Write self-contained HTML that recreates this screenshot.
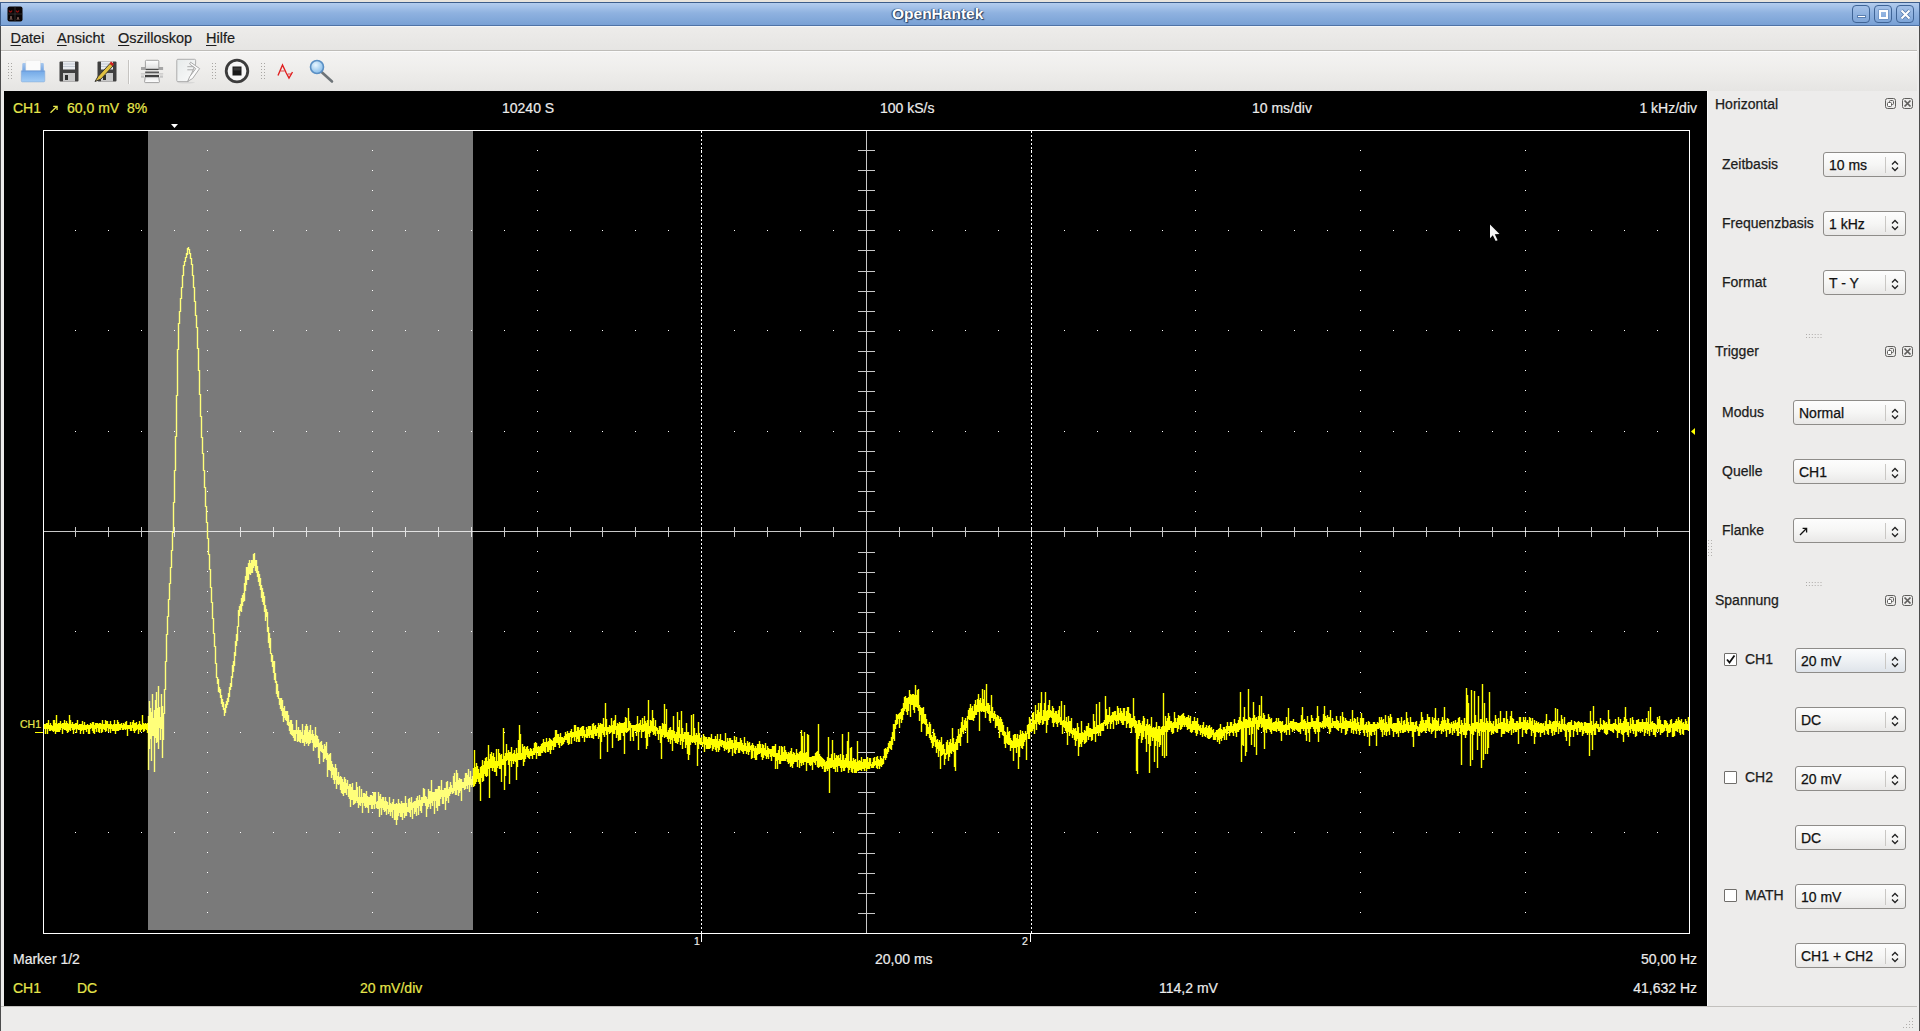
<!DOCTYPE html>
<html><head><meta charset="utf-8">
<style>
*{box-sizing:border-box}
html,body{margin:0;padding:0}
body{width:1920px;height:1031px;overflow:hidden;position:relative;background:#e9e4dc;font-family:"Liberation Sans",sans-serif;color:#1a1a1a}
.abs{position:absolute}
#frame{position:absolute;left:0;top:2px;width:1920px;height:1029px;background:#edeceb;border-left:1px solid #4c4c4c;border-right:1px solid #4c4c4c}
#title{position:absolute;left:0;top:2px;width:1920px;height:24px;background:linear-gradient(#b4cdee,#8fb2e0 45%,#79a1d5);border-top:1px solid #3d5d8a;border-bottom:1px solid #4f73a6;border-left:1px solid #3d5d8a;border-right:1px solid #3d5d8a}
#title .t{position:absolute;left:891px;top:2px;font-weight:bold;font-size:15.5px;white-space:pre;color:#fff;text-shadow:0 0 1px #2a4060,1px 1px 1px #2a4060,-1px 0 1px #2a4060}
.wb{position:absolute;top:2px;width:18px;height:18px;border:1px solid #3f6496;border-radius:4px;background:linear-gradient(#a4c1e8,#7ea5d8)}
#menubar{position:absolute;left:1px;top:26px;width:1916px;height:25px;background:linear-gradient(#edecea,#e6e5e3);border-top:1px solid #f4f6f8;border-bottom:1px solid #bfbdb9}
.mi{position:absolute;top:3px;font-size:14.5px;color:#1c1c1c;-webkit-text-stroke:0.2px #1c1c1c}
.mi u{text-decoration:underline;text-underline-offset:1.5px}
#toolbar{position:absolute;left:1px;top:51px;width:1916px;height:40px;background:linear-gradient(#f4f3f2,#eeedeb 50%,#e6e5e3);border-top:1px solid #fbfbfb}
.grip{position:absolute;width:6px;height:17px;background-image:radial-gradient(circle,#a8a6a3 0.7px,transparent 1px);background-size:3px 3.3px}
#scope{position:absolute;left:4px;top:91px;width:1703px;height:915px;background:#000}
.st{position:absolute;font-size:14px;white-space:pre;line-height:16px;-webkit-text-stroke:0.2px currentColor}
.y{color:#e6e64c}
.w{color:#ececec}
#dock{position:absolute;left:1707px;top:91px;width:210px;height:915px;background:#edeceb;border-left:1px solid #f8f8f8}
.dt{position:absolute;font-size:14px;color:#1c1c1c;white-space:pre;line-height:16px;-webkit-text-stroke:0.25px #1c1c1c}
.cb{position:absolute;height:25px;border:1px solid #8e8c89;border-radius:3px;background:linear-gradient(#fdfdfd,#f6f6f5 50%,#e9e8e7);font-size:14px;color:#111;line-height:16px;-webkit-text-stroke:0.25px #111}
.cb span{position:absolute;left:5px;top:3.5px;white-space:pre}
.cb i{position:absolute;right:19px;top:4px;height:16px;border-left:1px solid #c9c7c4}
.cb svg{position:absolute;right:6px;top:7px}
.chk{position:absolute;width:13px;height:13px;border:1px solid #706e6b;background:#fff;border-radius:1px}
.dicon{position:absolute;width:11px;height:11px;border:1px solid #5f5e5c;border-radius:2px}
.sep{position:absolute;width:17px;height:4px;background-image:radial-gradient(circle,#b5b3b0 0.6px,transparent 0.9px);background-size:2.83px 2px}
#status{position:absolute;left:1px;top:1006px;width:1916px;height:24px;background:#edeceb;border-top:1px solid #c2c0bd}
</style></head><body>
<div id="frame"></div>
<div id="title">
  <svg class="abs" style="left:6px;top:3px" width="16" height="16" viewBox="0 0 16 16"><rect x="0.5" y="0.5" width="15" height="15" rx="2" fill="#0a0505"/><path d="M2 4.5q1.5 3 3 0M9 4.5q1.5 3 3 0" stroke="#8a1010" stroke-width="1.3" fill="none"/><path d="M0.5 8h15M8 0.5v15" stroke="#444" stroke-width="0.6"/><path d="M3 14l1-4 1 4M10 14l1-3 1 3" stroke="#8b6a60" stroke-width="0.8" fill="none"/></svg>
  <div class="t">OpenHantek</div>
  <div class="wb" style="left:1851px"><div class="abs" style="left:4px;top:9px;width:9px;height:3px;background:#fff;border:0.5px solid #5a7fb0"></div></div>
  <div class="wb" style="left:1873px"><div class="abs" style="left:4px;top:4px;width:9px;height:9px;border:2px solid #fff;box-shadow:0 0 0 0.5px #5a7fb0"></div></div>
  <div class="wb" style="left:1895px"><svg class="abs" style="left:3px;top:3px" width="11" height="11" viewBox="0 0 11 11"><path d="M1.5 1.5l8 8M9.5 1.5l-8 8" stroke="#4f74a8" stroke-width="3.6"/><path d="M1.5 1.5l8 8M9.5 1.5l-8 8" stroke="#fff" stroke-width="2.2"/></svg></div>
</div>
<div id="menubar">
  <div class="mi" style="left:9.5px"><u>D</u>atei</div>
  <div class="mi" style="left:56px"><u>A</u>nsicht</div>
  <div class="mi" style="left:117px"><u>O</u>szilloskop</div>
  <div class="mi" style="left:205px"><u>H</u>ilfe</div>
</div>
<div id="toolbar">
<svg class="abs" style="left:7px;top:11px" width="4" height="17" fill="#a9a7a4"><rect x="0" y="0" width="1" height="1"/><rect x="0" y="3" width="1" height="1"/><rect x="0" y="6" width="1" height="1"/><rect x="0" y="9" width="1" height="1"/><rect x="0" y="12" width="1" height="1"/><rect x="0" y="15" width="1" height="1"/><rect x="3" y="0" width="1" height="1"/><rect x="3" y="3" width="1" height="1"/><rect x="3" y="6" width="1" height="1"/><rect x="3" y="9" width="1" height="1"/><rect x="3" y="12" width="1" height="1"/><rect x="3" y="15" width="1" height="1"/></svg>
<svg class="abs" style="left:211px;top:11px" width="4" height="17" fill="#a9a7a4"><rect x="0" y="0" width="1" height="1"/><rect x="0" y="3" width="1" height="1"/><rect x="0" y="6" width="1" height="1"/><rect x="0" y="9" width="1" height="1"/><rect x="0" y="12" width="1" height="1"/><rect x="0" y="15" width="1" height="1"/><rect x="3" y="0" width="1" height="1"/><rect x="3" y="3" width="1" height="1"/><rect x="3" y="6" width="1" height="1"/><rect x="3" y="9" width="1" height="1"/><rect x="3" y="12" width="1" height="1"/><rect x="3" y="15" width="1" height="1"/></svg>
<svg class="abs" style="left:260px;top:11px" width="4" height="17" fill="#a9a7a4"><rect x="0" y="0" width="1" height="1"/><rect x="0" y="3" width="1" height="1"/><rect x="0" y="6" width="1" height="1"/><rect x="0" y="9" width="1" height="1"/><rect x="0" y="12" width="1" height="1"/><rect x="0" y="15" width="1" height="1"/><rect x="3" y="0" width="1" height="1"/><rect x="3" y="3" width="1" height="1"/><rect x="3" y="6" width="1" height="1"/><rect x="3" y="9" width="1" height="1"/><rect x="3" y="12" width="1" height="1"/><rect x="3" y="15" width="1" height="1"/></svg>
  <div class="abs" style="left:127px;top:8px;width:1px;height:24px;background:#c6c4c1;box-shadow:1px 0 0 #fafafa"></div>
  <svg class="abs" style="left:19px;top:7px" width="26" height="25" viewBox="0 0 26 25"><defs><linearGradient id="gb" x1="0" y1="0" x2="0" y2="1"><stop offset="0" stop-color="#a8c9ef"/><stop offset="1" stop-color="#6c9fe0"/></linearGradient><linearGradient id="gf" x1="0" y1="0" x2="0" y2="1"><stop offset="0" stop-color="#5f95dc"/><stop offset="0.15" stop-color="#7aaee9"/><stop offset="1" stop-color="#a3cdf6"/></linearGradient></defs>
<rect x="2.3" y="4" width="21.5" height="9" rx="1" fill="url(#gb)"/>
<rect x="5.9" y="1.2" width="14.4" height="10.5" fill="#fbfbfb" stroke="#e0e0e0" stroke-width="0.5"/>
<path d="M1.3 11.8H24.8V21.8Q24.8 22.9 23.8 22.9H2.3Q1.3 22.9 1.3 21.8Z" fill="url(#gf)" stroke="#86abd8" stroke-width="0.6"/></svg>
<svg class="abs" style="left:57px;top:8px" width="23" height="23" viewBox="0 0 23 23"><path d="M1.5 2.5q0-1 1-1h17q1 0 1 1v18q0 1-1 1h-17q-1 0-1-1z" fill="#3f3f3f"/>
<rect x="5" y="1.5" width="12" height="8" fill="#e9ecf0"/><path d="M5 4h12M5 6.5h12" stroke="#b9c2cc" stroke-width="0.8"/>
<rect x="5" y="13" width="12" height="8.5" fill="#c9c9c9"/><rect x="7" y="15" width="3" height="5" fill="#2e2e2e"/></svg>
<svg class="abs" style="left:92px;top:8px" width="25" height="23" viewBox="0 0 25 23"><path d="M4.5 2.5q0-1 1-1h17q1 0 1 1v18q0 1-1 1h-17q-1 0-1-1z" fill="#3f3f3f"/>
<rect x="8" y="1.5" width="12" height="8" fill="#e9ecf0"/><path d="M8 4h12M8 6.5h12" stroke="#b9c2cc" stroke-width="0.8"/>
<rect x="8" y="13" width="12" height="8.5" fill="#c9c9c9"/><rect x="10" y="15" width="3" height="5" fill="#2e2e2e"/>
<path d="M2 21.5l3-5 12-13 3 2.5-12 13z" fill="#e0c040" stroke="#2a2a2a" stroke-width="0.9"/><path d="M16.5 3.5l3 2.5 1.5-2-3-2.5z" fill="#d02020"/></svg>
<svg class="abs" style="left:139px;top:7px" width="25" height="25" viewBox="0 0 25 25"><defs><linearGradient id="pg" x1="0" y1="0" x2="0" y2="1"><stop offset="0" stop-color="#ffffff"/><stop offset="1" stop-color="#dcdcdc"/></linearGradient><linearGradient id="tg" x1="0" y1="0" x2="0" y2="1"><stop offset="0" stop-color="#e8e8e8"/><stop offset="1" stop-color="#ffffff"/></linearGradient></defs>
<rect x="1" y="8" width="4.2" height="3" fill="#a5a5a5"/><rect x="18.9" y="8" width="4.2" height="3" fill="#a5a5a5"/>
<rect x="5.4" y="1.3" width="13.4" height="9.4" rx="1" fill="url(#pg)" stroke="#8c8c8c" stroke-width="0.8"/>
<path d="M5.6 10.3h13" stroke="#333" stroke-width="1"/>
<rect x="5.2" y="12.5" width="13.8" height="1.8" fill="#585858"/>
<path d="M0.8 14.9H23.2" stroke="#b0b0b0" stroke-width="0.8"/>
<rect x="1" y="16.5" width="3" height="2.2" fill="#c4c4c4"/><rect x="20" y="16.5" width="3" height="2.2" fill="#c4c4c4"/>
<rect x="5" y="16.2" width="14" height="1.8" fill="#151515"/>
<path d="M5.2 18H18.8L19.4 22.8Q19.4 23.6 18.6 23.6H5.4Q4.6 23.6 4.6 22.8Z" fill="url(#tg)" stroke="#8a8a8a" stroke-width="0.8"/></svg>
<svg class="abs" style="left:174px;top:6px" width="27" height="26" viewBox="0 0 27 26"><defs><linearGradient id="eg" x1="0" y1="0" x2="1" y2="1"><stop offset="0" stop-color="#e6eaea"/><stop offset="1" stop-color="#fbfbfb"/></linearGradient></defs>
<ellipse cx="11" cy="24.6" rx="9" ry="0.9" fill="#d0d0d0" opacity="0.7"/>
<path d="M1.8 2.3Q1.8 1.3 2.8 1.3H19.6Q20.6 1.3 20.6 2.3V6L13.2 23.6H2.8Q1.8 23.6 1.8 22.6Z" fill="url(#eg)" stroke="#a6a6a6" stroke-width="0.9"/>
<path d="M15.6 4.2L24.6 10.6L17.6 20.5L12.6 23.4L14.8 18.5L20.8 10.6L14.6 6Z" fill="#fcfcfc" stroke="#a2a2a2" stroke-width="0.9" stroke-linejoin="round"/>
<path d="M12.3 8.7H18.4M12.3 11.8H18.4" stroke="#a0a0a0" stroke-width="0.9"/></svg>
<svg class="abs" style="left:223px;top:6px" width="26" height="26" viewBox="0 0 26 26"><circle cx="13" cy="13" r="10.8" fill="#f7f7f7" stroke="#3c3c3c" stroke-width="2.8"/>
<rect x="8.5" y="8.5" width="9" height="9" fill="#1a1a1a"/><rect x="9.5" y="9.5" width="7" height="3" fill="#5a5a5a" opacity="0.5"/></svg>
<svg class="abs" style="left:276px;top:11px" width="18" height="17" viewBox="0 0 18 17"><path d="M1 12.5L5.5 2 9 9.5l3 5.5 3.5-6" fill="none" stroke="#e02020" stroke-width="1.4"/><path d="M3.5 8h4M11 11h4" stroke="#e03030" stroke-width="0.9"/></svg>
<svg class="abs" style="left:308px;top:7px" width="26" height="25" viewBox="0 0 26 25"><defs><radialGradient id="mg" cx="0.4" cy="0.35" r="0.7"><stop offset="0" stop-color="#e8f6ff"/><stop offset="1" stop-color="#7fb8e8"/></radialGradient></defs>
<path d="M12 12.5l11 10" stroke="#6e7478" stroke-width="2.6" stroke-linecap="round"/>
<circle cx="8" cy="8" r="6.5" fill="url(#mg)" stroke="#5a8fc4" stroke-width="1.6"/></svg>
</div>
<div id="scope">
  <div class="st y" style="left:9px;top:9px">CH1</div>
  <svg class="abs" style="left:45px;top:13px" width="10" height="10" viewBox="0 0 10 10"><path d="M1.5 8.8L7.6 2.7M4.2 2.3H8.1V6" fill="none" stroke="#e6e64c" stroke-width="1.3"/></svg>
  <div class="st y" style="left:63px;top:9px">60,0 mV  8%</div>
  <div class="st w" style="left:498px;top:9px">10240 S</div>
  <div class="st w" style="left:876px;top:9px">100 kS/s</div>
  <div class="st w" style="left:1248px;top:9px">10 ms/div</div>
  <div class="st w" style="right:10px;top:9px">1 kHz/div</div>
  <div class="st w" style="left:9px;top:860px">Marker 1/2</div>
  <div class="st w" style="left:871px;top:860px">20,00 ms</div>
  <div class="st w" style="right:10px;top:860px">50,00 Hz</div>
  <div class="st y" style="left:9px;top:889px">CH1</div>
  <div class="st y" style="left:73px;top:889px">DC</div>
  <div class="st y" style="left:356px;top:889px">20 mV/div</div>
  <div class="st w" style="left:1155px;top:889px">114,2 mV</div>
  <div class="st w" style="right:10px;top:889px">41,632 Hz</div>
</div>
<svg width="1920" height="1031" viewBox="0 0 1920 1031" style="position:absolute;left:0;top:0" shape-rendering="crispEdges">
<path d="M43.5 531.5H1689.5M866.5 130.5V933.5M75.5 527v10M108.5 527v10M141.5 527v10M174.5 527v10M207.5 527v10M240.5 527v10M273.5 527v10M306.5 527v10M339.5 527v10M372.5 527v10M405.5 527v10M438.5 527v10M471.5 527v10M504.5 527v10M537.5 527v10M570.5 527v10M602.5 527v10M635.5 527v10M668.5 527v10M701.5 527v10M734.5 527v10M767.5 527v10M800.5 527v10M833.5 527v10M899.5 527v10M932.5 527v10M965.5 527v10M998.5 527v10M1031.5 527v10M1064.5 527v10M1097.5 527v10M1130.5 527v10M1162.5 527v10M1195.5 527v10M1228.5 527v10M1261.5 527v10M1294.5 527v10M1327.5 527v10M1360.5 527v10M1393.5 527v10M1426.5 527v10M1459.5 527v10M1492.5 527v10M1525.5 527v10M1558.5 527v10M1591.5 527v10M1624.5 527v10M1657.5 527v10M858 150.5h17M858 170.5h17M858 190.5h17M858 210.5h17M858 230.5h17M858 250.5h17M858 271.5h17M858 291.5h17M858 311.5h17M858 331.5h17M858 351.5h17M858 371.5h17M858 391.5h17M858 411.5h17M858 431.5h17M858 451.5h17M858 471.5h17M858 491.5h17M858 511.5h17M858 552.5h17M858 572.5h17M858 592.5h17M858 612.5h17M858 632.5h17M858 652.5h17M858 672.5h17M858 692.5h17M858 712.5h17M858 732.5h17M858 752.5h17M858 772.5h17M858 792.5h17M858 813.5h17M858 833.5h17M858 853.5h17M858 873.5h17M858 893.5h17M858 913.5h17" stroke="#c8c8c8" stroke-width="1" fill="none"/>
<path d="M207 150h1v1h-1zM207 170h1v1h-1zM207 190h1v1h-1zM207 210h1v1h-1zM207 230h1v1h-1zM207 250h1v1h-1zM207 270h1v1h-1zM207 290h1v1h-1zM207 310h1v1h-1zM207 330h1v1h-1zM207 350h1v1h-1zM207 370h1v1h-1zM207 390h1v1h-1zM207 411h1v1h-1zM207 431h1v1h-1zM207 451h1v1h-1zM207 471h1v1h-1zM207 491h1v1h-1zM207 511h1v1h-1zM207 531h1v1h-1zM207 551h1v1h-1zM207 571h1v1h-1zM207 591h1v1h-1zM207 611h1v1h-1zM207 631h1v1h-1zM207 651h1v1h-1zM207 672h1v1h-1zM207 692h1v1h-1zM207 712h1v1h-1zM207 732h1v1h-1zM207 752h1v1h-1zM207 772h1v1h-1zM207 792h1v1h-1zM207 812h1v1h-1zM207 832h1v1h-1zM207 852h1v1h-1zM207 872h1v1h-1zM207 892h1v1h-1zM207 912h1v1h-1zM372 150h1v1h-1zM372 170h1v1h-1zM372 190h1v1h-1zM372 210h1v1h-1zM372 230h1v1h-1zM372 250h1v1h-1zM372 270h1v1h-1zM372 290h1v1h-1zM372 310h1v1h-1zM372 330h1v1h-1zM372 350h1v1h-1zM372 370h1v1h-1zM372 390h1v1h-1zM372 411h1v1h-1zM372 431h1v1h-1zM372 451h1v1h-1zM372 471h1v1h-1zM372 491h1v1h-1zM372 511h1v1h-1zM372 531h1v1h-1zM372 551h1v1h-1zM372 571h1v1h-1zM372 591h1v1h-1zM372 611h1v1h-1zM372 631h1v1h-1zM372 651h1v1h-1zM372 672h1v1h-1zM372 692h1v1h-1zM372 712h1v1h-1zM372 732h1v1h-1zM372 752h1v1h-1zM372 772h1v1h-1zM372 792h1v1h-1zM372 812h1v1h-1zM372 832h1v1h-1zM372 852h1v1h-1zM372 872h1v1h-1zM372 892h1v1h-1zM372 912h1v1h-1zM537 150h1v1h-1zM537 170h1v1h-1zM537 190h1v1h-1zM537 210h1v1h-1zM537 230h1v1h-1zM537 250h1v1h-1zM537 270h1v1h-1zM537 290h1v1h-1zM537 310h1v1h-1zM537 330h1v1h-1zM537 350h1v1h-1zM537 370h1v1h-1zM537 390h1v1h-1zM537 411h1v1h-1zM537 431h1v1h-1zM537 451h1v1h-1zM537 471h1v1h-1zM537 491h1v1h-1zM537 511h1v1h-1zM537 531h1v1h-1zM537 551h1v1h-1zM537 571h1v1h-1zM537 591h1v1h-1zM537 611h1v1h-1zM537 631h1v1h-1zM537 651h1v1h-1zM537 672h1v1h-1zM537 692h1v1h-1zM537 712h1v1h-1zM537 732h1v1h-1zM537 752h1v1h-1zM537 772h1v1h-1zM537 792h1v1h-1zM537 812h1v1h-1zM537 832h1v1h-1zM537 852h1v1h-1zM537 872h1v1h-1zM537 892h1v1h-1zM537 912h1v1h-1zM701 150h1v1h-1zM701 170h1v1h-1zM701 190h1v1h-1zM701 210h1v1h-1zM701 230h1v1h-1zM701 250h1v1h-1zM701 270h1v1h-1zM701 290h1v1h-1zM701 310h1v1h-1zM701 330h1v1h-1zM701 350h1v1h-1zM701 370h1v1h-1zM701 390h1v1h-1zM701 411h1v1h-1zM701 431h1v1h-1zM701 451h1v1h-1zM701 471h1v1h-1zM701 491h1v1h-1zM701 511h1v1h-1zM701 531h1v1h-1zM701 551h1v1h-1zM701 571h1v1h-1zM701 591h1v1h-1zM701 611h1v1h-1zM701 631h1v1h-1zM701 651h1v1h-1zM701 672h1v1h-1zM701 692h1v1h-1zM701 712h1v1h-1zM701 732h1v1h-1zM701 752h1v1h-1zM701 772h1v1h-1zM701 792h1v1h-1zM701 812h1v1h-1zM701 832h1v1h-1zM701 852h1v1h-1zM701 872h1v1h-1zM701 892h1v1h-1zM701 912h1v1h-1zM1031 150h1v1h-1zM1031 170h1v1h-1zM1031 190h1v1h-1zM1031 210h1v1h-1zM1031 230h1v1h-1zM1031 250h1v1h-1zM1031 270h1v1h-1zM1031 290h1v1h-1zM1031 310h1v1h-1zM1031 330h1v1h-1zM1031 350h1v1h-1zM1031 370h1v1h-1zM1031 390h1v1h-1zM1031 411h1v1h-1zM1031 431h1v1h-1zM1031 451h1v1h-1zM1031 471h1v1h-1zM1031 491h1v1h-1zM1031 511h1v1h-1zM1031 531h1v1h-1zM1031 551h1v1h-1zM1031 571h1v1h-1zM1031 591h1v1h-1zM1031 611h1v1h-1zM1031 631h1v1h-1zM1031 651h1v1h-1zM1031 672h1v1h-1zM1031 692h1v1h-1zM1031 712h1v1h-1zM1031 732h1v1h-1zM1031 752h1v1h-1zM1031 772h1v1h-1zM1031 792h1v1h-1zM1031 812h1v1h-1zM1031 832h1v1h-1zM1031 852h1v1h-1zM1031 872h1v1h-1zM1031 892h1v1h-1zM1031 912h1v1h-1zM1195 150h1v1h-1zM1195 170h1v1h-1zM1195 190h1v1h-1zM1195 210h1v1h-1zM1195 230h1v1h-1zM1195 250h1v1h-1zM1195 270h1v1h-1zM1195 290h1v1h-1zM1195 310h1v1h-1zM1195 330h1v1h-1zM1195 350h1v1h-1zM1195 370h1v1h-1zM1195 390h1v1h-1zM1195 411h1v1h-1zM1195 431h1v1h-1zM1195 451h1v1h-1zM1195 471h1v1h-1zM1195 491h1v1h-1zM1195 511h1v1h-1zM1195 531h1v1h-1zM1195 551h1v1h-1zM1195 571h1v1h-1zM1195 591h1v1h-1zM1195 611h1v1h-1zM1195 631h1v1h-1zM1195 651h1v1h-1zM1195 672h1v1h-1zM1195 692h1v1h-1zM1195 712h1v1h-1zM1195 732h1v1h-1zM1195 752h1v1h-1zM1195 772h1v1h-1zM1195 792h1v1h-1zM1195 812h1v1h-1zM1195 832h1v1h-1zM1195 852h1v1h-1zM1195 872h1v1h-1zM1195 892h1v1h-1zM1195 912h1v1h-1zM1360 150h1v1h-1zM1360 170h1v1h-1zM1360 190h1v1h-1zM1360 210h1v1h-1zM1360 230h1v1h-1zM1360 250h1v1h-1zM1360 270h1v1h-1zM1360 290h1v1h-1zM1360 310h1v1h-1zM1360 330h1v1h-1zM1360 350h1v1h-1zM1360 370h1v1h-1zM1360 390h1v1h-1zM1360 411h1v1h-1zM1360 431h1v1h-1zM1360 451h1v1h-1zM1360 471h1v1h-1zM1360 491h1v1h-1zM1360 511h1v1h-1zM1360 531h1v1h-1zM1360 551h1v1h-1zM1360 571h1v1h-1zM1360 591h1v1h-1zM1360 611h1v1h-1zM1360 631h1v1h-1zM1360 651h1v1h-1zM1360 672h1v1h-1zM1360 692h1v1h-1zM1360 712h1v1h-1zM1360 732h1v1h-1zM1360 752h1v1h-1zM1360 772h1v1h-1zM1360 792h1v1h-1zM1360 812h1v1h-1zM1360 832h1v1h-1zM1360 852h1v1h-1zM1360 872h1v1h-1zM1360 892h1v1h-1zM1360 912h1v1h-1zM1525 150h1v1h-1zM1525 170h1v1h-1zM1525 190h1v1h-1zM1525 210h1v1h-1zM1525 230h1v1h-1zM1525 250h1v1h-1zM1525 270h1v1h-1zM1525 290h1v1h-1zM1525 310h1v1h-1zM1525 330h1v1h-1zM1525 350h1v1h-1zM1525 370h1v1h-1zM1525 390h1v1h-1zM1525 411h1v1h-1zM1525 431h1v1h-1zM1525 451h1v1h-1zM1525 471h1v1h-1zM1525 491h1v1h-1zM1525 511h1v1h-1zM1525 531h1v1h-1zM1525 551h1v1h-1zM1525 571h1v1h-1zM1525 591h1v1h-1zM1525 611h1v1h-1zM1525 631h1v1h-1zM1525 651h1v1h-1zM1525 672h1v1h-1zM1525 692h1v1h-1zM1525 712h1v1h-1zM1525 732h1v1h-1zM1525 752h1v1h-1zM1525 772h1v1h-1zM1525 792h1v1h-1zM1525 812h1v1h-1zM1525 832h1v1h-1zM1525 852h1v1h-1zM1525 872h1v1h-1zM1525 892h1v1h-1zM1525 912h1v1h-1zM75 230h1v1h-1zM108 230h1v1h-1zM141 230h1v1h-1zM174 230h1v1h-1zM240 230h1v1h-1zM273 230h1v1h-1zM306 230h1v1h-1zM339 230h1v1h-1zM405 230h1v1h-1zM438 230h1v1h-1zM471 230h1v1h-1zM504 230h1v1h-1zM570 230h1v1h-1zM602 230h1v1h-1zM635 230h1v1h-1zM668 230h1v1h-1zM734 230h1v1h-1zM767 230h1v1h-1zM800 230h1v1h-1zM833 230h1v1h-1zM899 230h1v1h-1zM932 230h1v1h-1zM965 230h1v1h-1zM998 230h1v1h-1zM1064 230h1v1h-1zM1097 230h1v1h-1zM1130 230h1v1h-1zM1162 230h1v1h-1zM1228 230h1v1h-1zM1261 230h1v1h-1zM1294 230h1v1h-1zM1327 230h1v1h-1zM1393 230h1v1h-1zM1426 230h1v1h-1zM1459 230h1v1h-1zM1492 230h1v1h-1zM1558 230h1v1h-1zM1591 230h1v1h-1zM1624 230h1v1h-1zM1657 230h1v1h-1zM75 330h1v1h-1zM108 330h1v1h-1zM141 330h1v1h-1zM174 330h1v1h-1zM240 330h1v1h-1zM273 330h1v1h-1zM306 330h1v1h-1zM339 330h1v1h-1zM405 330h1v1h-1zM438 330h1v1h-1zM471 330h1v1h-1zM504 330h1v1h-1zM570 330h1v1h-1zM602 330h1v1h-1zM635 330h1v1h-1zM668 330h1v1h-1zM734 330h1v1h-1zM767 330h1v1h-1zM800 330h1v1h-1zM833 330h1v1h-1zM899 330h1v1h-1zM932 330h1v1h-1zM965 330h1v1h-1zM998 330h1v1h-1zM1064 330h1v1h-1zM1097 330h1v1h-1zM1130 330h1v1h-1zM1162 330h1v1h-1zM1228 330h1v1h-1zM1261 330h1v1h-1zM1294 330h1v1h-1zM1327 330h1v1h-1zM1393 330h1v1h-1zM1426 330h1v1h-1zM1459 330h1v1h-1zM1492 330h1v1h-1zM1558 330h1v1h-1zM1591 330h1v1h-1zM1624 330h1v1h-1zM1657 330h1v1h-1zM75 431h1v1h-1zM108 431h1v1h-1zM141 431h1v1h-1zM174 431h1v1h-1zM240 431h1v1h-1zM273 431h1v1h-1zM306 431h1v1h-1zM339 431h1v1h-1zM405 431h1v1h-1zM438 431h1v1h-1zM471 431h1v1h-1zM504 431h1v1h-1zM570 431h1v1h-1zM602 431h1v1h-1zM635 431h1v1h-1zM668 431h1v1h-1zM734 431h1v1h-1zM767 431h1v1h-1zM800 431h1v1h-1zM833 431h1v1h-1zM899 431h1v1h-1zM932 431h1v1h-1zM965 431h1v1h-1zM998 431h1v1h-1zM1064 431h1v1h-1zM1097 431h1v1h-1zM1130 431h1v1h-1zM1162 431h1v1h-1zM1228 431h1v1h-1zM1261 431h1v1h-1zM1294 431h1v1h-1zM1327 431h1v1h-1zM1393 431h1v1h-1zM1426 431h1v1h-1zM1459 431h1v1h-1zM1492 431h1v1h-1zM1558 431h1v1h-1zM1591 431h1v1h-1zM1624 431h1v1h-1zM1657 431h1v1h-1zM75 631h1v1h-1zM108 631h1v1h-1zM141 631h1v1h-1zM174 631h1v1h-1zM240 631h1v1h-1zM273 631h1v1h-1zM306 631h1v1h-1zM339 631h1v1h-1zM405 631h1v1h-1zM438 631h1v1h-1zM471 631h1v1h-1zM504 631h1v1h-1zM570 631h1v1h-1zM602 631h1v1h-1zM635 631h1v1h-1zM668 631h1v1h-1zM734 631h1v1h-1zM767 631h1v1h-1zM800 631h1v1h-1zM833 631h1v1h-1zM899 631h1v1h-1zM932 631h1v1h-1zM965 631h1v1h-1zM998 631h1v1h-1zM1064 631h1v1h-1zM1097 631h1v1h-1zM1130 631h1v1h-1zM1162 631h1v1h-1zM1228 631h1v1h-1zM1261 631h1v1h-1zM1294 631h1v1h-1zM1327 631h1v1h-1zM1393 631h1v1h-1zM1426 631h1v1h-1zM1459 631h1v1h-1zM1492 631h1v1h-1zM1558 631h1v1h-1zM1591 631h1v1h-1zM1624 631h1v1h-1zM1657 631h1v1h-1zM75 732h1v1h-1zM108 732h1v1h-1zM141 732h1v1h-1zM174 732h1v1h-1zM240 732h1v1h-1zM273 732h1v1h-1zM306 732h1v1h-1zM339 732h1v1h-1zM405 732h1v1h-1zM438 732h1v1h-1zM471 732h1v1h-1zM504 732h1v1h-1zM570 732h1v1h-1zM602 732h1v1h-1zM635 732h1v1h-1zM668 732h1v1h-1zM734 732h1v1h-1zM767 732h1v1h-1zM800 732h1v1h-1zM833 732h1v1h-1zM899 732h1v1h-1zM932 732h1v1h-1zM965 732h1v1h-1zM998 732h1v1h-1zM1064 732h1v1h-1zM1097 732h1v1h-1zM1130 732h1v1h-1zM1162 732h1v1h-1zM1228 732h1v1h-1zM1261 732h1v1h-1zM1294 732h1v1h-1zM1327 732h1v1h-1zM1393 732h1v1h-1zM1426 732h1v1h-1zM1459 732h1v1h-1zM1492 732h1v1h-1zM1558 732h1v1h-1zM1591 732h1v1h-1zM1624 732h1v1h-1zM1657 732h1v1h-1zM75 832h1v1h-1zM108 832h1v1h-1zM141 832h1v1h-1zM174 832h1v1h-1zM240 832h1v1h-1zM273 832h1v1h-1zM306 832h1v1h-1zM339 832h1v1h-1zM405 832h1v1h-1zM438 832h1v1h-1zM471 832h1v1h-1zM504 832h1v1h-1zM570 832h1v1h-1zM602 832h1v1h-1zM635 832h1v1h-1zM668 832h1v1h-1zM734 832h1v1h-1zM767 832h1v1h-1zM800 832h1v1h-1zM833 832h1v1h-1zM899 832h1v1h-1zM932 832h1v1h-1zM965 832h1v1h-1zM998 832h1v1h-1zM1064 832h1v1h-1zM1097 832h1v1h-1zM1130 832h1v1h-1zM1162 832h1v1h-1zM1228 832h1v1h-1zM1261 832h1v1h-1zM1294 832h1v1h-1zM1327 832h1v1h-1zM1393 832h1v1h-1zM1426 832h1v1h-1zM1459 832h1v1h-1zM1492 832h1v1h-1zM1558 832h1v1h-1zM1591 832h1v1h-1zM1624 832h1v1h-1zM1657 832h1v1h-1z" fill="#ffffff"/>
<path d="M701.5 131V933M1031.5 131V933" stroke="#ffffff" stroke-width="1" stroke-dasharray="2 2" fill="none"/>
<path d="M701.5 934v8M1030.5 934v8" stroke="#ffffff" stroke-width="1" fill="none"/>
<rect x="43.5" y="130.5" width="1646.0" height="803.0" fill="none" stroke="#ffffff" stroke-width="1"/>
<path d="M44.5 724V729M45.5 724V734M46.5 723V729M47.5 723V734M48.5 720V729M49.5 725V731M50.5 723V731M51.5 725V730M52.5 726V731M53.5 720V732M54.5 720V731M55.5 723V734M56.5 715V732M57.5 724V732M58.5 723V732M59.5 723V732M60.5 721V730M61.5 724V728M62.5 723V734M63.5 723V729M64.5 720V730M65.5 723V730M66.5 721V731M67.5 723V733M68.5 724V732M69.5 715V730M70.5 720V731M71.5 724V728M72.5 722V730M73.5 724V734M74.5 724V730M75.5 723V729M76.5 723V733M77.5 720V729M78.5 725V730M79.5 724V730M80.5 724V734M81.5 724V731M82.5 721V730M83.5 725V734M84.5 722V730M85.5 725V730M86.5 725V732M87.5 724V729M88.5 725V734M89.5 725V734M90.5 723V729M91.5 724V728M92.5 722V731M93.5 722V733M94.5 725V734M95.5 723V729M96.5 723V732M97.5 723V728M98.5 724V732M99.5 723V733M100.5 723V729M101.5 724V733M102.5 720V732M103.5 724V729M104.5 724V730M105.5 720V732M106.5 721V731M107.5 721V728M108.5 724V732M109.5 724V729M110.5 721V733M111.5 724V729M112.5 725V731M113.5 724V731M114.5 720V731M115.5 724V734M116.5 724V731M117.5 720V731M118.5 722V731M119.5 724V730M120.5 724V730M121.5 723V728M122.5 725V730M123.5 723V730M124.5 724V729M125.5 722V730M126.5 721V729M127.5 725V736M128.5 725V729M129.5 725V729M130.5 722V731M131.5 725V731M132.5 722V728M133.5 720V731M134.5 723V733M135.5 723V731M136.5 722V730M137.5 725V729M138.5 724V734M139.5 721V730M140.5 724V732M141.5 725V730M142.5 715V729M143.5 723V732M144.5 724V731M145.5 723V729M146.5 724V730M147.5 723V733M148.5 716V770M149.5 701V749M150.5 708V739M151.5 712V761M152.5 694V736M153.5 718V736M154.5 710V772M155.5 700V738M156.5 692V743M157.5 708V742M158.5 686V749M159.5 707V728M160.5 717V740M161.5 694V729M162.5 706V758M163.5 713V740M164.5 689V714M165.5 661V690M166.5 634V662M167.5 616V635M168.5 599V617M169.5 583V600M170.5 567V584M171.5 550V568M172.5 532V551M173.5 502V533M174.5 470V503M175.5 436V471M176.5 395V437M177.5 349V396M178.5 323V350M179.5 311V324M180.5 298V312M181.5 287V299M182.5 275V288M183.5 265V276M184.5 261V266M185.5 257V262M186.5 253V258M187.5 248V255M188.5 247V250M189.5 249V254M190.5 253V259M191.5 258V265M192.5 264V276M193.5 275V288M194.5 287V302M195.5 301V316M196.5 315V328M197.5 327V349M198.5 348V371M199.5 370V395M200.5 394V417M201.5 416V438M202.5 437V454M203.5 453V471M204.5 470V488M205.5 487V507M206.5 506V523M207.5 522V539M208.5 538V555M209.5 554V570M210.5 569V588M211.5 587V603M212.5 602V619M213.5 618V634M214.5 633V647M215.5 646V664M216.5 663V678M217.5 677V684M218.5 679V692M219.5 687V693M220.5 689V698M221.5 695V704M222.5 699V707M223.5 702V710M224.5 708V716M225.5 704V713M226.5 701V708M227.5 698V705M228.5 693V702M229.5 687V697M230.5 683V690M231.5 676V687M232.5 665V678M233.5 661V672M234.5 652V666M235.5 641V656M236.5 634V646M237.5 626V641M238.5 610V627M239.5 606V616M240.5 604V611M241.5 598V612M242.5 595V606M243.5 593V602M244.5 583V601M245.5 576V591M246.5 567V585M247.5 567V580M248.5 563V580M249.5 560V574M250.5 563V575M251.5 560V573M252.5 560V573M253.5 554V568M254.5 553V566M255.5 560V571M256.5 560V573M257.5 566V577M258.5 571V582M259.5 574V586M260.5 578V590M261.5 585V598M262.5 588V602M263.5 592V605M264.5 596V612M265.5 605V621M266.5 609V617M267.5 612V632M268.5 627V643M269.5 633V648M270.5 638V654M271.5 653V662M272.5 655V667M273.5 661V673M274.5 661V680M275.5 673V683M276.5 681V694M277.5 684V697M278.5 691V699M279.5 698V705M280.5 698V709M281.5 698V711M282.5 700V716M283.5 708V722M284.5 706V718M285.5 711V720M286.5 711V721M287.5 711V725M288.5 715V726M289.5 722V731M290.5 720V734M291.5 720V735M292.5 724V736M293.5 730V738M294.5 730V741M295.5 730V741M296.5 720V734M297.5 730V742M298.5 727V741M299.5 730V742M300.5 730V743M301.5 732V739M302.5 724V743M303.5 735V743M304.5 730V746M305.5 726V742M306.5 724V744M307.5 726V743M308.5 732V746M309.5 730V744M310.5 725V743M311.5 734V740M312.5 730V743M313.5 734V751M314.5 736V747M315.5 727V748M316.5 735V747M317.5 736V747M318.5 739V758M319.5 743V764M320.5 742V751M321.5 741V752M322.5 745V753M323.5 749V762M324.5 744V759M325.5 746V758M326.5 742V760M327.5 753V777M328.5 755V770M329.5 754V770M330.5 753V771M331.5 761V778M332.5 764V775M333.5 767V780M334.5 768V784M335.5 764V780M336.5 768V789M337.5 776V784M338.5 772V785M339.5 777V784M340.5 776V790M341.5 777V793M342.5 779V794M343.5 782V796M344.5 777V793M345.5 779V793M346.5 783V795M347.5 780V789M348.5 786V797M349.5 784V799M350.5 784V807M351.5 787V800M352.5 783V800M353.5 790V805M354.5 790V804M355.5 790V803M356.5 782V801M357.5 787V803M358.5 797V808M359.5 786V805M360.5 797V806M361.5 789V803M362.5 797V813M363.5 793V803M364.5 793V806M365.5 794V808M366.5 791V807M367.5 796V808M368.5 797V813M369.5 797V805M370.5 795V805M371.5 795V809M372.5 796V809M373.5 792V805M374.5 792V809M375.5 792V804M376.5 802V808M377.5 801V809M378.5 792V809M379.5 796V817M380.5 794V808M381.5 799V815M382.5 797V808M383.5 797V810M384.5 801V812M385.5 797V811M386.5 801V815M387.5 802V809M388.5 805V814M389.5 797V812M390.5 803V816M391.5 804V812M392.5 802V818M393.5 799V810M394.5 804V820M395.5 804V820M396.5 803V825M397.5 804V820M398.5 799V816M399.5 803V813M400.5 804V817M401.5 801V817M402.5 803V820M403.5 803V813M404.5 803V818M405.5 796V816M406.5 803V816M407.5 807V812M408.5 799V812M409.5 798V813M410.5 802V817M411.5 797V810M412.5 803V819M413.5 802V808M414.5 801V814M415.5 801V812M416.5 798V816M417.5 796V808M418.5 800V815M419.5 795V806M420.5 800V811M421.5 797V813M422.5 797V806M423.5 788V803M424.5 789V803M425.5 796V806M426.5 797V817M427.5 799V809M428.5 789V807M429.5 791V804M430.5 791V809M431.5 780V803M432.5 792V806M433.5 792V801M434.5 792V814M435.5 789V801M436.5 789V808M437.5 789V811M438.5 786V806M439.5 786V806M440.5 790V799M441.5 780V797M442.5 790V804M443.5 790V804M444.5 788V797M445.5 788V810M446.5 782V801M447.5 781V798M448.5 789V803M449.5 787V796M450.5 782V794M451.5 785V792M452.5 788V794M453.5 776V793M454.5 773V791M455.5 782V795M456.5 770V795M457.5 773V790M458.5 780V796M459.5 778V793M460.5 779V791M461.5 779V801M462.5 782V788M463.5 782V788M464.5 778V790M465.5 773V789M466.5 773V786M467.5 775V789M468.5 769V785M469.5 777V792M470.5 771V785M471.5 779V787M472.5 776V785M473.5 768V787M474.5 750V786M475.5 767V784M476.5 763V782M477.5 766V779M478.5 769V782M479.5 773V784M480.5 767V801M481.5 766V778M482.5 760V782M483.5 765V781M484.5 761V774M485.5 758V776M486.5 757V777M487.5 761V776M488.5 745V769M489.5 759V798M490.5 754V768M491.5 752V768M492.5 756V771M493.5 753V768M494.5 757V772M495.5 761V772M496.5 749V776M497.5 761V768M498.5 749V766M499.5 753V769M500.5 755V769M501.5 754V782M502.5 759V765M503.5 728V765M504.5 756V790M505.5 753V776M506.5 744V761M507.5 753V760M508.5 750V765M509.5 752V784M510.5 752V761M511.5 747V767M512.5 754V761M513.5 753V764M514.5 750V761M515.5 754V762M516.5 748V780M517.5 753V767M518.5 740V760M519.5 725V760M520.5 734V760M521.5 753V760M522.5 744V759M523.5 747V766M524.5 746V762M525.5 749V759M526.5 747V755M527.5 746V757M528.5 749V758M529.5 751V759M530.5 748V756M531.5 749V756M532.5 751V759M533.5 748V755M534.5 743V755M535.5 742V753M536.5 743V759M537.5 747V752M538.5 746V756M539.5 747V756M540.5 746V756M541.5 744V753M542.5 743V753M543.5 739V751M544.5 742V752M545.5 742V753M546.5 738V747M547.5 742V752M548.5 741V752M549.5 738V750M550.5 739V754M551.5 740V750M552.5 741V746M553.5 738V750M554.5 737V747M555.5 730V747M556.5 730V743M557.5 734V743M558.5 734V745M559.5 737V748M560.5 733V743M561.5 737V746M562.5 737V745M563.5 738V744M564.5 736V742M565.5 732V740M566.5 734V740M567.5 731V743M568.5 733V745M569.5 733V744M570.5 731V737M571.5 729V744M572.5 732V738M573.5 732V737M574.5 725V741M575.5 725V737M576.5 731V742M577.5 727V739M578.5 727V742M579.5 730V742M580.5 728V736M581.5 727V736M582.5 726V738M583.5 726V736M584.5 730V742M585.5 734V737M586.5 727V738M587.5 729V738M588.5 726V736M589.5 726V738M590.5 726V735M591.5 730V738M592.5 724V738M593.5 723V739M594.5 726V734M595.5 725V736M596.5 729V736M597.5 727V733M598.5 723V739M599.5 725V737M600.5 723V759M601.5 724V742M602.5 724V733M603.5 718V735M604.5 727V737M605.5 703V731M606.5 719V735M607.5 727V752M608.5 727V732M609.5 725V734M610.5 726V733M611.5 718V732M612.5 725V748M613.5 721V734M614.5 720V734M615.5 715V730M616.5 726V738M617.5 723V735M618.5 724V741M619.5 722V740M620.5 723V740M621.5 723V733M622.5 723V733M623.5 723V736M624.5 722V754M625.5 717V732M626.5 718V733M627.5 728V732M628.5 708V731M629.5 721V730M630.5 723V741M631.5 725V728M632.5 725V737M633.5 725V741M634.5 725V731M635.5 725V731M636.5 724V736M637.5 716V732M638.5 724V750M639.5 723V732M640.5 720V730M641.5 725V738M642.5 718V732M643.5 724V732M644.5 716V731M645.5 721V738M646.5 723V749M647.5 720V746M648.5 700V734M649.5 726V737M650.5 720V733M651.5 721V731M652.5 710V732M653.5 718V735M654.5 726V734M655.5 720V736M656.5 727V731M657.5 728V734M658.5 730V740M659.5 726V734M660.5 726V743M661.5 729V759M662.5 723V737M663.5 724V735M664.5 704V738M665.5 724V737M666.5 709V737M667.5 732V739M668.5 730V742M669.5 728V739M670.5 727V744M671.5 730V740M672.5 730V751M673.5 716V738M674.5 731V741M675.5 734V743M676.5 732V743M677.5 712V744M678.5 727V742M679.5 720V738M680.5 734V745M681.5 711V741M682.5 728V749M683.5 734V742M684.5 732V739M685.5 732V748M686.5 723V745M687.5 732V754M688.5 732V760M689.5 735V755M690.5 735V745M691.5 715V742M692.5 736V743M693.5 714V742M694.5 728V743M695.5 735V745M696.5 733V742M697.5 735V766M698.5 722V749M699.5 733V744M700.5 738V745M701.5 737V744M702.5 742V747M703.5 734V744M704.5 736V752M705.5 737V745M706.5 737V749M707.5 739V749M708.5 737V749M709.5 737V749M710.5 738V748M711.5 734V745M712.5 739V751M713.5 739V749M714.5 739V747M715.5 736V750M716.5 739V752M717.5 734V748M718.5 741V752M719.5 739V750M720.5 734V746M721.5 740V747M722.5 740V745M723.5 741V748M724.5 741V751M725.5 733V749M726.5 742V750M727.5 738V749M728.5 741V753M729.5 738V752M730.5 738V749M731.5 740V749M732.5 740V756M733.5 743V748M734.5 736V753M735.5 740V754M736.5 737V750M737.5 742V748M738.5 742V753M739.5 742V753M740.5 738V750M741.5 740V751M742.5 743V752M743.5 745V754M744.5 737V751M745.5 743V751M746.5 746V754M747.5 741V752M748.5 743V755M749.5 742V752M750.5 746V750M751.5 745V759M752.5 743V758M753.5 745V751M754.5 748V758M755.5 746V760M756.5 748V760M757.5 744V755M758.5 744V754M759.5 741V754M760.5 744V753M761.5 748V757M762.5 744V760M763.5 745V758M764.5 748V755M765.5 743V756M766.5 750V759M767.5 746V757M768.5 748V759M769.5 749V754M770.5 749V757M771.5 749V761M772.5 746V756M773.5 746V757M774.5 746V757M775.5 744V769M776.5 753V761M777.5 753V769M778.5 750V760M779.5 746V764M780.5 755V764M781.5 746V761M782.5 747V761M783.5 752V761M784.5 746V761M785.5 750V761M786.5 752V759M787.5 754V762M788.5 752V764M789.5 753V763M790.5 751V767M791.5 748V766M792.5 754V768M793.5 752V764M794.5 753V762M795.5 755V762M796.5 749V762M797.5 753V767M798.5 754V760M799.5 752V768M800.5 751V763M801.5 730V766M802.5 736V763M803.5 753V765M804.5 732V762M805.5 753V762M806.5 752V771M807.5 734V763M808.5 735V763M809.5 757V765M810.5 757V766M811.5 757V765M812.5 756V770M813.5 756V762M814.5 756V763M815.5 753V765M816.5 752V761M817.5 751V767M818.5 724V768M819.5 754V767M820.5 756V766M821.5 757V767M822.5 758V769M823.5 759V766M824.5 760V772M825.5 762V772M826.5 761V769M827.5 757V771M828.5 737V769M829.5 758V793M830.5 758V768M831.5 754V768M832.5 740V767M833.5 760V769M834.5 753V769M835.5 758V772M836.5 755V767M837.5 756V772M838.5 755V766M839.5 758V766M840.5 754V768M841.5 760V772M842.5 734V768M843.5 755V771M844.5 760V771M845.5 758V768M846.5 754V767M847.5 741V768M848.5 732V773M849.5 761V770M850.5 748V768M851.5 747V772M852.5 761V773M853.5 758V769M854.5 760V773M855.5 759V773M856.5 762V773M857.5 741V771M858.5 761V771M859.5 760V770M860.5 761V770M861.5 757V771M862.5 762V769M863.5 759V769M864.5 759V771M865.5 759V768M866.5 759V771M867.5 757V769M868.5 762V769M869.5 758V769M870.5 758V766M871.5 764V768M872.5 762V768M873.5 758V768M874.5 757V766M875.5 761V765M876.5 757V768M877.5 756V769M878.5 759V766M879.5 760V769M880.5 756V766M881.5 758V767M882.5 759V765M883.5 756V764M884.5 749V758M885.5 748V760M886.5 749V758M887.5 747V754M888.5 743V752M889.5 741V748M890.5 741V749M891.5 737V750M892.5 732V745M893.5 724V739M894.5 724V741M895.5 720V729M896.5 714V725M897.5 715V724M898.5 714V719M899.5 713V728M900.5 712V719M901.5 709V723M902.5 708V720M903.5 703V715M904.5 697V711M905.5 696V709M906.5 698V712M907.5 698V715M908.5 697V711M909.5 690V704M910.5 694V717M911.5 695V705M912.5 694V705M913.5 694V710M914.5 695V713M915.5 685V707M916.5 695V707M917.5 690V708M918.5 689V711M919.5 705V721M920.5 707V715M921.5 708V732M922.5 708V724M923.5 707V723M924.5 714V724M925.5 714V725M926.5 719V736M927.5 724V734M928.5 727V734M929.5 722V738M930.5 724V740M931.5 735V743M932.5 737V748M933.5 729V746M934.5 733V742M935.5 736V747M936.5 740V753M937.5 739V749M938.5 742V757M939.5 740V751M940.5 742V769M941.5 737V756M942.5 745V755M943.5 744V754M944.5 749V765M945.5 753V759M946.5 742V755M947.5 740V754M948.5 745V761M949.5 742V757M950.5 739V753M951.5 743V754M952.5 728V751M953.5 738V752M954.5 744V767M955.5 742V771M956.5 739V750M957.5 736V750M958.5 729V743M959.5 734V743M960.5 728V746M961.5 722V737M962.5 717V732M963.5 725V734M964.5 720V730M965.5 718V731M966.5 721V728M967.5 716V743M968.5 710V719M969.5 708V720M970.5 704V720M971.5 708V720M972.5 706V720M973.5 711V721M974.5 704V718M975.5 700V715M976.5 705V715M977.5 699V712M978.5 694V712M979.5 700V731M980.5 698V711M981.5 703V712M982.5 689V711M983.5 699V712M984.5 690V712M985.5 706V718M986.5 684V711M987.5 703V713M988.5 703V714M989.5 705V721M990.5 711V723M991.5 695V718M992.5 707V718M993.5 713V721M994.5 711V719M995.5 714V728M996.5 717V726M997.5 715V726M998.5 716V730M999.5 719V738M1000.5 717V732M1001.5 719V732M1002.5 722V735M1003.5 725V736M1004.5 731V744M1005.5 732V748M1006.5 735V743M1007.5 727V744M1008.5 732V745M1009.5 731V745M1010.5 738V751M1011.5 740V748M1012.5 741V748M1013.5 735V761M1014.5 734V748M1015.5 734V748M1016.5 738V753M1017.5 734V747M1018.5 739V769M1019.5 735V757M1020.5 730V746M1021.5 734V748M1022.5 731V749M1023.5 733V746M1024.5 734V742M1025.5 731V740M1026.5 733V760M1027.5 725V734M1028.5 724V739M1029.5 717V739M1030.5 719V732M1031.5 724V732M1032.5 713V731M1033.5 712V729M1034.5 720V734M1035.5 705V724M1036.5 714V730M1037.5 710V722M1038.5 703V724M1039.5 712V725M1040.5 703V723M1041.5 692V720M1042.5 716V725M1043.5 710V724M1044.5 703V721M1045.5 692V721M1046.5 711V733M1047.5 710V725M1048.5 705V720M1049.5 700V718M1050.5 710V717M1051.5 711V718M1052.5 706V723M1053.5 708V727M1054.5 713V723M1055.5 711V722M1056.5 711V724M1057.5 714V727M1058.5 710V723M1059.5 706V722M1060.5 717V725M1061.5 701V725M1062.5 721V734M1063.5 720V727M1064.5 705V728M1065.5 721V731M1066.5 717V733M1067.5 722V745M1068.5 716V732M1069.5 721V736M1070.5 721V733M1071.5 718V734M1072.5 730V738M1073.5 728V735M1074.5 729V740M1075.5 728V746M1076.5 731V741M1077.5 723V739M1078.5 727V756M1079.5 733V747M1080.5 733V744M1081.5 721V747M1082.5 732V742M1083.5 733V740M1084.5 730V744M1085.5 731V743M1086.5 726V742M1087.5 726V736M1088.5 723V740M1089.5 728V737M1090.5 728V737M1091.5 729V741M1092.5 729V740M1093.5 714V734M1094.5 721V734M1095.5 727V742M1096.5 704V734M1097.5 725V732M1098.5 725V736M1099.5 702V733M1100.5 724V736M1101.5 723V731M1102.5 723V731M1103.5 722V731M1104.5 720V724M1105.5 696V726M1106.5 709V725M1107.5 715V729M1108.5 715V724M1109.5 707V722M1110.5 716V729M1111.5 715V724M1112.5 712V722M1113.5 712V729M1114.5 711V720M1115.5 711V721M1116.5 715V725M1117.5 706V721M1118.5 708V724M1119.5 713V720M1120.5 708V721M1121.5 711V723M1122.5 713V725M1123.5 708V725M1124.5 708V721M1125.5 716V721M1126.5 711V728M1127.5 707V724M1128.5 707V723M1129.5 713V728M1130.5 714V728M1131.5 718V733M1132.5 718V727M1133.5 698V726M1134.5 716V728M1135.5 720V733M1136.5 721V771M1137.5 724V774M1138.5 720V739M1139.5 720V736M1140.5 723V733M1141.5 725V743M1142.5 721V740M1143.5 716V737M1144.5 718V731M1145.5 726V739M1146.5 724V752M1147.5 719V735M1148.5 725V744M1149.5 724V773M1150.5 726V746M1151.5 717V737M1152.5 728V741M1153.5 727V738M1154.5 728V762M1155.5 727V746M1156.5 722V741M1157.5 729V768M1158.5 726V742M1159.5 726V747M1160.5 729V745M1161.5 727V735M1162.5 726V756M1163.5 693V735M1164.5 726V758M1165.5 716V732M1166.5 721V756M1167.5 718V732M1168.5 713V730M1169.5 716V730M1170.5 721V728M1171.5 721V732M1172.5 723V734M1173.5 722V733M1174.5 712V728M1175.5 718V728M1176.5 722V728M1177.5 718V732M1178.5 715V729M1179.5 716V725M1180.5 716V730M1181.5 715V729M1182.5 714V727M1183.5 713V725M1184.5 716V727M1185.5 718V725M1186.5 717V727M1187.5 717V730M1188.5 715V729M1189.5 718V729M1190.5 716V732M1191.5 724V733M1192.5 721V732M1193.5 721V730M1194.5 717V730M1195.5 721V733M1196.5 721V736M1197.5 718V734M1198.5 724V730M1199.5 726V731M1200.5 725V735M1201.5 728V733M1202.5 725V737M1203.5 722V734M1204.5 728V736M1205.5 727V737M1206.5 725V735M1207.5 728V738M1208.5 726V739M1209.5 725V739M1210.5 728V738M1211.5 727V737M1212.5 730V735M1213.5 729V740M1214.5 733V740M1215.5 732V740M1216.5 730V737M1217.5 730V742M1218.5 729V740M1219.5 728V744M1220.5 724V739M1221.5 729V741M1222.5 730V738M1223.5 727V736M1224.5 727V740M1225.5 729V733M1226.5 726V740M1227.5 722V734M1228.5 726V731M1229.5 726V736M1230.5 722V733M1231.5 722V732M1232.5 726V733M1233.5 724V736M1234.5 719V731M1235.5 723V733M1236.5 724V737M1237.5 723V732M1238.5 720V732M1239.5 717V730M1240.5 692V729M1241.5 721V762M1242.5 722V745M1243.5 717V746M1244.5 707V728M1245.5 719V756M1246.5 719V752M1247.5 720V728M1248.5 689V728M1249.5 717V735M1250.5 718V727M1251.5 721V745M1252.5 718V734M1253.5 702V727M1254.5 715V747M1255.5 718V724M1256.5 717V755M1257.5 720V729M1258.5 716V730M1259.5 705V727M1260.5 716V724M1261.5 696V728M1262.5 718V727M1263.5 713V732M1264.5 715V749M1265.5 719V730M1266.5 719V733M1267.5 719V729M1268.5 714V729M1269.5 717V730M1270.5 719V732M1271.5 718V734M1272.5 723V730M1273.5 722V731M1274.5 722V731M1275.5 721V731M1276.5 718V732M1277.5 722V729M1278.5 718V731M1279.5 721V731M1280.5 721V733M1281.5 722V741M1282.5 721V732M1283.5 725V731M1284.5 725V733M1285.5 724V732M1286.5 717V735M1287.5 725V730M1288.5 708V730M1289.5 723V735M1290.5 721V728M1291.5 721V729M1292.5 721V732M1293.5 719V730M1294.5 722V731M1295.5 722V729M1296.5 722V730M1297.5 723V731M1298.5 723V732M1299.5 723V732M1300.5 722V734M1301.5 715V729M1302.5 707V729M1303.5 720V731M1304.5 719V729M1305.5 721V735M1306.5 723V741M1307.5 716V729M1308.5 722V733M1309.5 722V742M1310.5 722V729M1311.5 715V727M1312.5 718V727M1313.5 721V729M1314.5 721V732M1315.5 721V734M1316.5 718V729M1317.5 706V732M1318.5 716V742M1319.5 722V732M1320.5 722V727M1321.5 723V728M1322.5 721V727M1323.5 714V729M1324.5 706V727M1325.5 716V728M1326.5 718V726M1327.5 715V727M1328.5 717V729M1329.5 717V734M1330.5 710V732M1331.5 723V728M1332.5 718V728M1333.5 721V726M1334.5 721V728M1335.5 721V728M1336.5 716V729M1337.5 720V730M1338.5 721V731M1339.5 723V728M1340.5 716V728M1341.5 723V733M1342.5 712V729M1343.5 717V729M1344.5 721V729M1345.5 718V735M1346.5 720V734M1347.5 721V731M1348.5 721V728M1349.5 721V728M1350.5 719V728M1351.5 722V733M1352.5 710V730M1353.5 721V734M1354.5 718V730M1355.5 719V731M1356.5 723V734M1357.5 717V729M1358.5 722V731M1359.5 725V735M1360.5 718V731M1361.5 713V730M1362.5 718V730M1363.5 718V733M1364.5 725V736M1365.5 724V730M1366.5 722V733M1367.5 725V737M1368.5 721V732M1369.5 722V746M1370.5 724V735M1371.5 724V736M1372.5 724V732M1373.5 722V732M1374.5 722V735M1375.5 724V731M1376.5 724V746M1377.5 722V729M1378.5 723V729M1379.5 717V728M1380.5 720V730M1381.5 717V732M1382.5 720V737M1383.5 719V730M1384.5 723V735M1385.5 715V732M1386.5 722V736M1387.5 724V732M1388.5 716V731M1389.5 718V735M1390.5 714V728M1391.5 717V729M1392.5 724V731M1393.5 723V737M1394.5 723V732M1395.5 723V732M1396.5 723V734M1397.5 718V733M1398.5 718V737M1399.5 721V731M1400.5 723V733M1401.5 717V730M1402.5 725V733M1403.5 721V733M1404.5 720V732M1405.5 724V732M1406.5 712V730M1407.5 718V731M1408.5 722V733M1409.5 725V731M1410.5 717V731M1411.5 722V731M1412.5 722V737M1413.5 722V747M1414.5 725V732M1415.5 722V732M1416.5 721V729M1417.5 726V731M1418.5 727V736M1419.5 724V736M1420.5 721V732M1421.5 712V733M1422.5 717V732M1423.5 720V731M1424.5 723V731M1425.5 720V733M1426.5 720V731M1427.5 714V728M1428.5 717V731M1429.5 717V732M1430.5 723V729M1431.5 724V734M1432.5 717V732M1433.5 720V731M1434.5 718V730M1435.5 708V738M1436.5 720V731M1437.5 721V731M1438.5 718V730M1439.5 726V731M1440.5 724V730M1441.5 721V734M1442.5 717V731M1443.5 720V732M1444.5 707V729M1445.5 720V731M1446.5 723V737M1447.5 718V730M1448.5 719V730M1449.5 723V734M1450.5 724V733M1451.5 722V728M1452.5 724V735M1453.5 721V731M1454.5 723V733M1455.5 720V729M1456.5 723V731M1457.5 722V736M1458.5 718V736M1459.5 717V728M1460.5 725V734M1461.5 720V765M1462.5 723V732M1463.5 725V735M1464.5 718V735M1465.5 723V738M1466.5 688V735M1467.5 695V731M1468.5 703V730M1469.5 724V731M1470.5 726V766M1471.5 690V734M1472.5 723V760M1473.5 723V735M1474.5 691V731M1475.5 715V732M1476.5 722V729M1477.5 722V750M1478.5 696V733M1479.5 723V736M1480.5 719V731M1481.5 719V768M1482.5 684V732M1483.5 722V760M1484.5 703V732M1485.5 723V754M1486.5 718V730M1487.5 721V754M1488.5 723V748M1489.5 692V732M1490.5 721V731M1491.5 723V735M1492.5 724V733M1493.5 721V734M1494.5 726V731M1495.5 715V732M1496.5 719V733M1497.5 724V733M1498.5 718V729M1499.5 723V729M1500.5 711V729M1501.5 722V737M1502.5 722V734M1503.5 718V734M1504.5 718V734M1505.5 723V731M1506.5 711V732M1507.5 719V732M1508.5 724V733M1509.5 721V731M1510.5 716V730M1511.5 711V735M1512.5 718V729M1513.5 719V733M1514.5 723V730M1515.5 723V732M1516.5 721V732M1517.5 721V730M1518.5 723V744M1519.5 717V729M1520.5 717V729M1521.5 722V728M1522.5 722V737M1523.5 717V730M1524.5 720V730M1525.5 717V733M1526.5 722V734M1527.5 720V730M1528.5 723V729M1529.5 717V729M1530.5 718V730M1531.5 721V736M1532.5 718V731M1533.5 725V733M1534.5 720V744M1535.5 723V737M1536.5 721V732M1537.5 723V732M1538.5 722V733M1539.5 724V732M1540.5 723V737M1541.5 723V733M1542.5 724V733M1543.5 723V732M1544.5 726V735M1545.5 721V730M1546.5 714V731M1547.5 724V734M1548.5 724V735M1549.5 720V729M1550.5 721V729M1551.5 724V733M1552.5 722V736M1553.5 721V731M1554.5 721V735M1555.5 708V732M1556.5 721V732M1557.5 709V727M1558.5 723V734M1559.5 721V729M1560.5 724V732M1561.5 715V732M1562.5 719V729M1563.5 724V730M1564.5 717V731M1565.5 724V737M1566.5 725V741M1567.5 723V730M1568.5 722V732M1569.5 722V746M1570.5 722V737M1571.5 720V730M1572.5 725V730M1573.5 725V737M1574.5 721V731M1575.5 722V729M1576.5 723V732M1577.5 722V735M1578.5 721V728M1579.5 722V732M1580.5 723V732M1581.5 722V730M1582.5 723V736M1583.5 726V734M1584.5 722V731M1585.5 722V733M1586.5 723V733M1587.5 723V735M1588.5 723V733M1589.5 723V756M1590.5 711V733M1591.5 721V735M1592.5 725V750M1593.5 706V731M1594.5 724V735M1595.5 723V735M1596.5 721V728M1597.5 724V729M1598.5 724V732M1599.5 727V732M1600.5 718V730M1601.5 724V729M1602.5 725V730M1603.5 720V729M1604.5 721V733M1605.5 723V734M1606.5 722V735M1607.5 724V734M1608.5 710V730M1609.5 719V730M1610.5 724V731M1611.5 724V731M1612.5 724V732M1613.5 723V733M1614.5 723V729M1615.5 719V730M1616.5 724V731M1617.5 725V738M1618.5 717V733M1619.5 723V733M1620.5 719V730M1621.5 723V734M1622.5 723V735M1623.5 721V742M1624.5 717V733M1625.5 707V732M1626.5 719V732M1627.5 722V735M1628.5 722V737M1629.5 726V730M1630.5 718V733M1631.5 724V729M1632.5 717V731M1633.5 720V734M1634.5 724V731M1635.5 724V737M1636.5 720V736M1637.5 720V731M1638.5 719V732M1639.5 722V731M1640.5 722V733M1641.5 722V731M1642.5 719V732M1643.5 722V729M1644.5 722V736M1645.5 722V733M1646.5 718V730M1647.5 722V734M1648.5 711V731M1649.5 724V736M1650.5 707V730M1651.5 722V732M1652.5 721V729M1653.5 723V735M1654.5 723V735M1655.5 724V737M1656.5 725V732M1657.5 717V729M1658.5 719V732M1659.5 716V729M1660.5 720V735M1661.5 724V733M1662.5 724V733M1663.5 725V732M1664.5 720V731M1665.5 720V728M1666.5 721V731M1667.5 723V737M1668.5 725V733M1669.5 724V733M1670.5 720V732M1671.5 719V728M1672.5 724V737M1673.5 723V737M1674.5 723V736M1675.5 721V731M1676.5 719V731M1677.5 721V732M1678.5 717V729M1679.5 720V733M1680.5 721V735M1681.5 719V729M1682.5 723V734M1683.5 722V735M1684.5 724V730M1685.5 719V730M1686.5 721V730M1687.5 724V730M1688.5 717V731" fill="none" stroke="#ffff00" stroke-width="1.4" shape-rendering="auto"/>
<rect x="148" y="131" width="325" height="798.5" fill="#ffffff" fill-opacity="0.478"/>
<path d="M171 124h7l-3.5 4z" fill="#ffffff" shape-rendering="auto"/>
<path d="M1691 431.5l4-3.5v7z" fill="#ffff00" shape-rendering="auto"/>
<path d="M35 732.5h8" stroke="#ffff00" stroke-width="1"/>
<path d="M1490 224.5L1499.5 234L1494.8 234.3L1497.6 240.2L1495.7 241L1492.8 235.2L1490 238.2Z" fill="#f4f4f4" shape-rendering="auto"/>
</svg>
<div class="st y" style="left:20px;top:718px;font-size:10.5px;line-height:12px">CH1</div>
<div class="st w" style="left:694px;top:935px;font-size:10.5px;line-height:12px">1</div>
<div class="st w" style="left:1022px;top:935px;font-size:10.5px;line-height:12px">2</div>
<div id="dock">
<div class="dt" style="left:7px;top:4.5px">Horizontal</div><svg class="abs" style="left:177px;top:7.299999999999997px" width="11" height="11" viewBox="0 0 11 11"><rect x="0.5" y="0.5" width="10" height="10" rx="2" fill="none" stroke="#5f5e5c"/><rect x="4.5" y="2.5" width="4" height="4" rx="1" fill="none" stroke="#5f5e5c"/><rect x="2.5" y="4.5" width="4" height="4" rx="1" fill="#fff" stroke="#5f5e5c"/></svg><svg class="abs" style="left:194px;top:7.299999999999997px" width="11" height="11" viewBox="0 0 11 11"><rect x="0.5" y="0.5" width="10" height="10" rx="2" fill="none" stroke="#5f5e5c"/><path d="M2.5 2.5l6 6M8.5 2.5l-6 6" stroke="#5f5e5c" stroke-width="1.7"/></svg>
<div class="dt" style="left:14px;top:65.2px">Zeitbasis</div>
<div class="cb" style="left:115px;top:61px;width:83px"><span>10 ms</span><i></i><svg width="8" height="12" viewBox="0 0 8 12"><path d="M1 4.5L4 1.5 7 4.5M1 7.5L4 10.5 7 7.5" fill="none" stroke="#222" stroke-width="1.3"/></svg></div>
<div class="dt" style="left:14px;top:124.2px">Frequenzbasis</div>
<div class="cb" style="left:115px;top:120px;width:83px"><span>1 kHz</span><i></i><svg width="8" height="12" viewBox="0 0 8 12"><path d="M1 4.5L4 1.5 7 4.5M1 7.5L4 10.5 7 7.5" fill="none" stroke="#222" stroke-width="1.3"/></svg></div>
<div class="dt" style="left:14px;top:183.1px">Format</div>
<div class="cb" style="left:115px;top:179px;width:83px"><span>T - Y</span><i></i><svg width="8" height="12" viewBox="0 0 8 12"><path d="M1 4.5L4 1.5 7 4.5M1 7.5L4 10.5 7 7.5" fill="none" stroke="#222" stroke-width="1.3"/></svg></div>
<svg class="abs" style="left:98px;top:243px" width="17" height="4" fill="#aeaca9"><rect x="0.0" y="0" width="1" height="1"/><rect x="0.0" y="3" width="1" height="1"/><rect x="2.9" y="0" width="1" height="1"/><rect x="2.9" y="3" width="1" height="1"/><rect x="5.8" y="0" width="1" height="1"/><rect x="5.8" y="3" width="1" height="1"/><rect x="8.7" y="0" width="1" height="1"/><rect x="8.7" y="3" width="1" height="1"/><rect x="11.6" y="0" width="1" height="1"/><rect x="11.6" y="3" width="1" height="1"/><rect x="14.5" y="0" width="1" height="1"/><rect x="14.5" y="3" width="1" height="1"/></svg>
<div class="dt" style="left:7px;top:252.3px">Trigger</div><svg class="abs" style="left:177px;top:255.2px" width="11" height="11" viewBox="0 0 11 11"><rect x="0.5" y="0.5" width="10" height="10" rx="2" fill="none" stroke="#5f5e5c"/><rect x="4.5" y="2.5" width="4" height="4" rx="1" fill="none" stroke="#5f5e5c"/><rect x="2.5" y="4.5" width="4" height="4" rx="1" fill="#fff" stroke="#5f5e5c"/></svg><svg class="abs" style="left:194px;top:255.2px" width="11" height="11" viewBox="0 0 11 11"><rect x="0.5" y="0.5" width="10" height="10" rx="2" fill="none" stroke="#5f5e5c"/><path d="M2.5 2.5l6 6M8.5 2.5l-6 6" stroke="#5f5e5c" stroke-width="1.7"/></svg>
<div class="dt" style="left:14px;top:313.1px">Modus</div>
<div class="cb" style="left:85px;top:309px;width:113px"><span>Normal</span><i></i><svg width="8" height="12" viewBox="0 0 8 12"><path d="M1 4.5L4 1.5 7 4.5M1 7.5L4 10.5 7 7.5" fill="none" stroke="#222" stroke-width="1.3"/></svg></div>
<div class="dt" style="left:14px;top:372.1px">Quelle</div>
<div class="cb" style="left:85px;top:368px;width:113px"><span>CH1</span><i></i><svg width="8" height="12" viewBox="0 0 8 12"><path d="M1 4.5L4 1.5 7 4.5M1 7.5L4 10.5 7 7.5" fill="none" stroke="#222" stroke-width="1.3"/></svg></div>
<div class="dt" style="left:14px;top:431.1px">Flanke</div>
<div class="cb" style="left:85px;top:427px;width:113px"><span><svg width="10" height="10" viewBox="0 0 10 10" style="position:absolute;left:0;top:3px"><path d="M1 9L7.2 2.8M3.6 2.4H7.6V6.4" fill="none" stroke="#111" stroke-width="1.3"/></svg></span><i></i><svg width="8" height="12" viewBox="0 0 8 12"><path d="M1 4.5L4 1.5 7 4.5M1 7.5L4 10.5 7 7.5" fill="none" stroke="#222" stroke-width="1.3"/></svg></div>
<svg class="abs" style="left:98px;top:491px" width="17" height="4" fill="#aeaca9"><rect x="0.0" y="0" width="1" height="1"/><rect x="0.0" y="3" width="1" height="1"/><rect x="2.9" y="0" width="1" height="1"/><rect x="2.9" y="3" width="1" height="1"/><rect x="5.8" y="0" width="1" height="1"/><rect x="5.8" y="3" width="1" height="1"/><rect x="8.7" y="0" width="1" height="1"/><rect x="8.7" y="3" width="1" height="1"/><rect x="11.6" y="0" width="1" height="1"/><rect x="11.6" y="3" width="1" height="1"/><rect x="14.5" y="0" width="1" height="1"/><rect x="14.5" y="3" width="1" height="1"/></svg>
<div class="dt" style="left:7px;top:501.1px">Spannung</div><svg class="abs" style="left:177px;top:504px" width="11" height="11" viewBox="0 0 11 11"><rect x="0.5" y="0.5" width="10" height="10" rx="2" fill="none" stroke="#5f5e5c"/><rect x="4.5" y="2.5" width="4" height="4" rx="1" fill="none" stroke="#5f5e5c"/><rect x="2.5" y="4.5" width="4" height="4" rx="1" fill="#fff" stroke="#5f5e5c"/></svg><svg class="abs" style="left:194px;top:504px" width="11" height="11" viewBox="0 0 11 11"><rect x="0.5" y="0.5" width="10" height="10" rx="2" fill="none" stroke="#5f5e5c"/><path d="M2.5 2.5l6 6M8.5 2.5l-6 6" stroke="#5f5e5c" stroke-width="1.7"/></svg>
<div class="chk" style="left:16px;top:562px"><svg class="abs" style="left:0;top:0" width="11" height="11" viewBox="0 0 11 11"><path d="M2 5.5l2.5 3L9.5 1.5" fill="none" stroke="#111" stroke-width="1.8"/></svg></div>
<div class="dt" style="left:37px;top:560.1px">CH1</div>
<div class="cb" style="left:87px;top:557px;width:111px;background:linear-gradient(#fbfcfd,#eef1f4 50%,#dfe4ea)"><span>20 mV</span><i></i><svg width="8" height="12" viewBox="0 0 8 12"><path d="M1 4.5L4 1.5 7 4.5M1 7.5L4 10.5 7 7.5" fill="none" stroke="#222" stroke-width="1.3"/></svg></div>
<div class="cb" style="left:87px;top:616px;width:111px"><span>DC</span><i></i><svg width="8" height="12" viewBox="0 0 8 12"><path d="M1 4.5L4 1.5 7 4.5M1 7.5L4 10.5 7 7.5" fill="none" stroke="#222" stroke-width="1.3"/></svg></div>
<div class="chk" style="left:16px;top:680px"></div>
<div class="dt" style="left:37px;top:678.1px">CH2</div>
<div class="cb" style="left:87px;top:675px;width:111px"><span>20 mV</span><i></i><svg width="8" height="12" viewBox="0 0 8 12"><path d="M1 4.5L4 1.5 7 4.5M1 7.5L4 10.5 7 7.5" fill="none" stroke="#222" stroke-width="1.3"/></svg></div>
<div class="cb" style="left:87px;top:734px;width:111px"><span>DC</span><i></i><svg width="8" height="12" viewBox="0 0 8 12"><path d="M1 4.5L4 1.5 7 4.5M1 7.5L4 10.5 7 7.5" fill="none" stroke="#222" stroke-width="1.3"/></svg></div>
<div class="chk" style="left:16px;top:798px"></div>
<div class="dt" style="left:37px;top:796.1px">MATH</div>
<div class="cb" style="left:87px;top:793px;width:111px"><span>10 mV</span><i></i><svg width="8" height="12" viewBox="0 0 8 12"><path d="M1 4.5L4 1.5 7 4.5M1 7.5L4 10.5 7 7.5" fill="none" stroke="#222" stroke-width="1.3"/></svg></div>
<div class="cb" style="left:87px;top:852px;width:111px"><span>CH1 + CH2</span><i></i><svg width="8" height="12" viewBox="0 0 8 12"><path d="M1 4.5L4 1.5 7 4.5M1 7.5L4 10.5 7 7.5" fill="none" stroke="#222" stroke-width="1.3"/></svg></div>
<svg class="abs" style="left:0px;top:449px" width="4" height="17" fill="#b4b2af"><rect x="0" y="0" width="1" height="1"/><rect x="0" y="3" width="1" height="1"/><rect x="0" y="6" width="1" height="1"/><rect x="0" y="9" width="1" height="1"/><rect x="0" y="12" width="1" height="1"/><rect x="0" y="15" width="1" height="1"/><rect x="3" y="0" width="1" height="1"/><rect x="3" y="3" width="1" height="1"/><rect x="3" y="6" width="1" height="1"/><rect x="3" y="9" width="1" height="1"/><rect x="3" y="12" width="1" height="1"/><rect x="3" y="15" width="1" height="1"/></svg>
</div>
<div id="status">
  <div class="abs" style="right:4px;top:10px;width:11px;height:11px;background-image:radial-gradient(circle,#b0aeab 0.7px,transparent 0.9px);background-size:3px 3px;clip-path:polygon(100% 0,100% 100%,0 100%)"></div>
</div>
</body></html>
